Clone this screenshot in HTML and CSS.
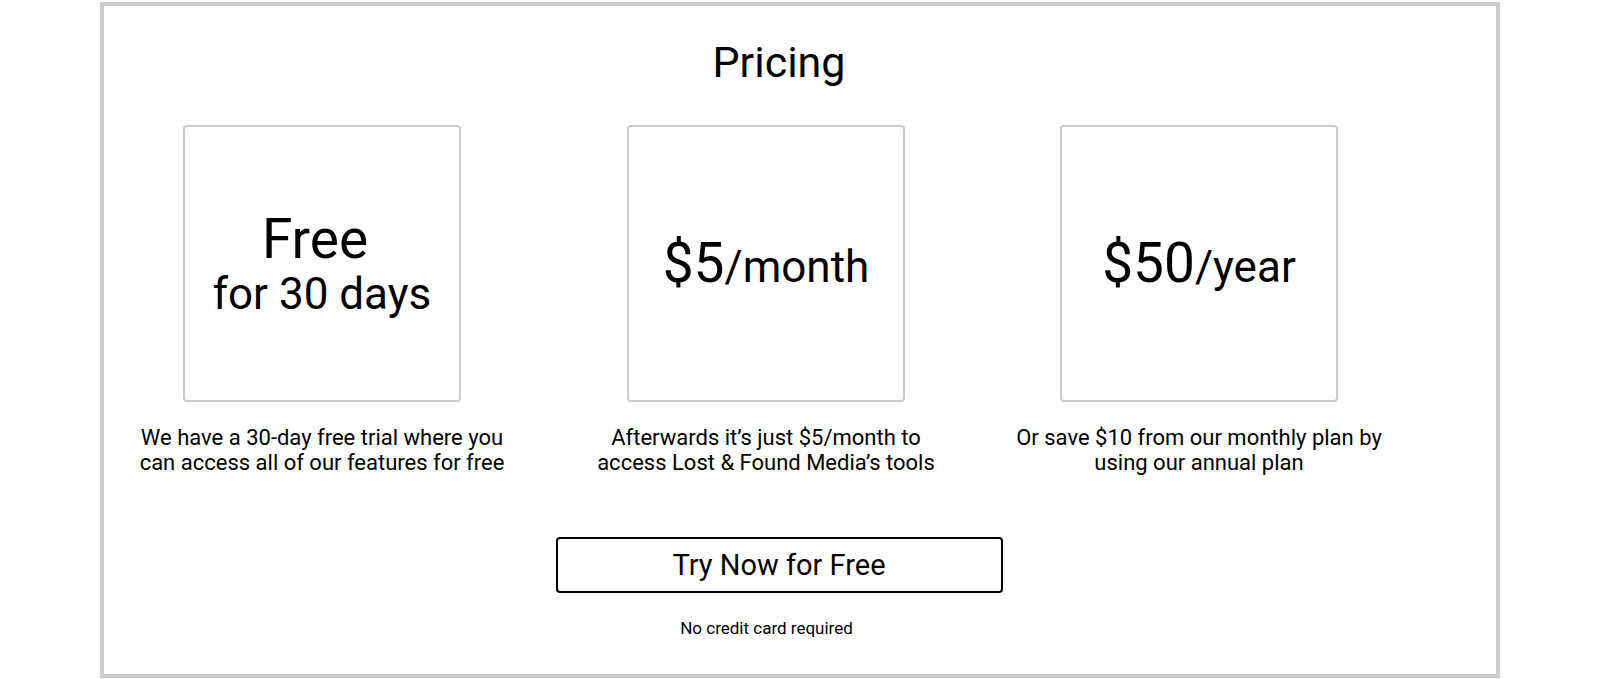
FILE: index.html
```html
<!DOCTYPE html>
<html lang="en">
<head>
<meta charset="utf-8">
<title>Pricing</title>
<link rel="stylesheet" href="styles.css">
</head>
<body>
<section class="pricing">
  <h1 class="pricing-title">Pricing</h1>
  <div class="plans">
    <div class="plan">
      <div class="plan-card">
        <div class="plan-price">
          <div class="price-big price-free">Free</div>
          <div class="price-small">for 30 days</div>
        </div>
      </div>
      <p class="plan-desc">We have a 30-day free trial where you<br>can access all of our features for free</p>
    </div>
    <div class="plan">
      <div class="plan-card">
        <div class="plan-price"><span class="price-big">$5</span><span class="price-small">/month</span></div>
      </div>
      <p class="plan-desc">Afterwards it’s just $5/month to<br>access Lost &amp; Found Media’s tools</p>
    </div>
    <div class="plan">
      <div class="plan-card">
        <div class="plan-price"><span class="price-big">$50</span><span class="price-small">/year</span></div>
      </div>
      <p class="plan-desc">Or save $10 from our monthly plan by<br>using our annual plan</p>
    </div>
  </div>
  <div class="cta">
    <button class="cta-button" type="button">Try Now for Free</button>
    <p class="cta-note">No credit card required</p>
  </div>
</section>
</body>
</html>
```

FILE: styles.css
```css
* {
  box-sizing: border-box;
}

html, body {
  margin: 0;
  padding: 0;
  background: #ffffff;
}

body {
  font-family: Roboto, "Liberation Sans", Arial, sans-serif;
  color: #000000;
}

.pricing {
  width: 1400px;
  height: 676px;
  margin: 2px auto 0;
  border: 4px solid #cccccc;
  padding: 31px 42px 0 0;
  display: flex;
  flex-direction: column;
}

.pricing-title {
  margin: 0;
  font-size: 43px;
  font-weight: 400;
  line-height: 50px;
  text-align: center;
}

.plans {
  margin-top: 38px;
  display: grid;
  grid-template-columns: 436px 452px 414px;
}

.plan {
  display: flex;
  flex-direction: column;
  align-items: center;
}

.plan-card {
  width: 278px;
  height: 277px;
  border: 2px solid #cccccc;
  border-radius: 4px;
  display: flex;
  align-items: center;
  justify-content: center;
}

.plan-price {
  text-align: center;
  line-height: 1.1;
}

.price-big {
  font-size: 55px;
}

.price-free {
  padding-right: 14px;
}

.price-small {
  font-size: 44px;
}

.plan-desc {
  margin: 23px 0 0;
  font-size: 22px;
  line-height: 25px;
  text-align: center;
}

.cta {
  margin-top: 62px;
  display: flex;
  flex-direction: column;
  align-items: center;
}

.cta-button {
  width: 447px;
  height: 56px;
  border: 2px solid #000000;
  border-radius: 4px;
  background: #ffffff;
  color: #000000;
  font-family: Roboto, "Liberation Sans", Arial, sans-serif;
  font-size: 29px;
  padding: 0;
  cursor: pointer;
}

.cta-note {
  margin: 25px 25px 0 0;
  font-size: 17px;
}
```
